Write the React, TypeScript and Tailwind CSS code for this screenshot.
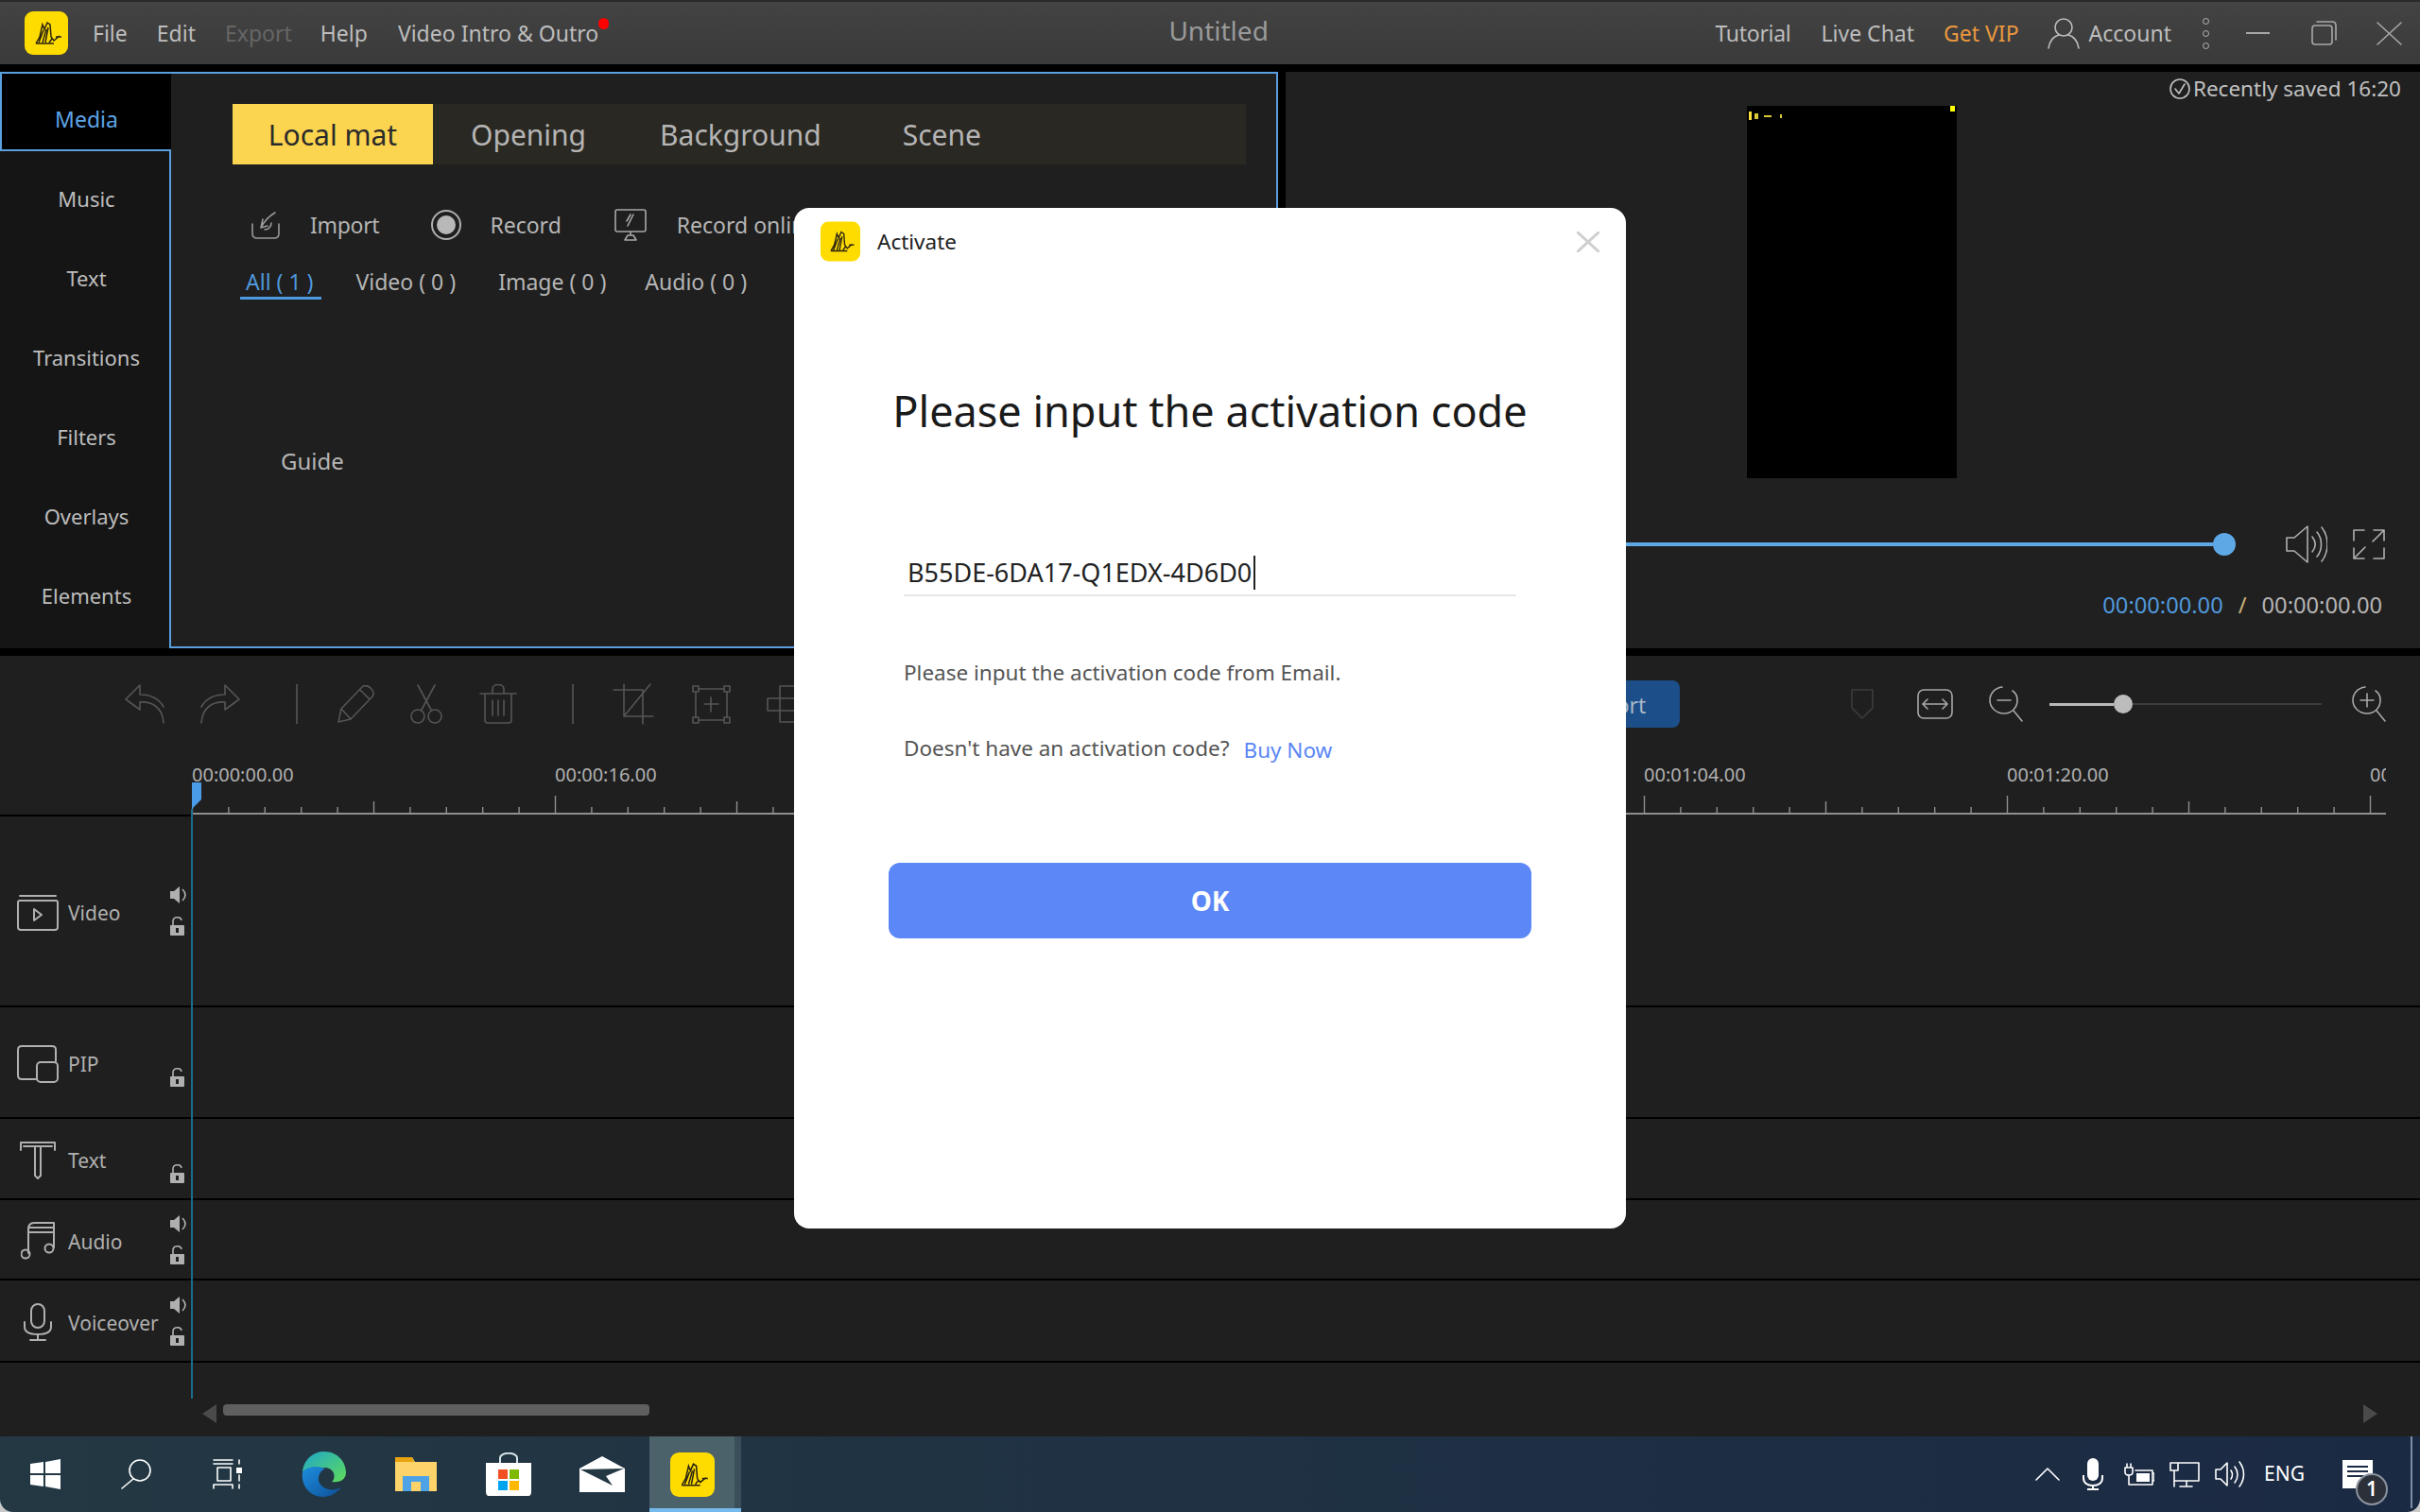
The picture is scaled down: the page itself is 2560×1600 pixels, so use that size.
import type { ReactNode } from "react";

function Logo({ className }: { className: string }) {
  return (
    <svg viewBox="0 0 46 46" className={className}>
      <rect width="46" height="46" rx="9" fill="#ffdc00" />
      <path
        d="M12 34 L16 27 L19 14 L21 19 L24 12 L27 14 L28 27 L31 31 L37 26 M12 34 H31 M15 33 L20 20 M19 33 L23 19 M22 33 L25 17 M26 33 L29 29 M33 27 H39"
        fill="none"
        stroke="#2a2410"
        strokeWidth="1.5"
      />
    </svg>
  );
}

function Line({ className, children, vb }: { className: string; children: ReactNode; vb: string }) {
  return (
    <svg viewBox={vb} className={className} fill="none" stroke="currentColor" strokeWidth="1.6" strokeLinecap="round" strokeLinejoin="round">
      {children}
    </svg>
  );
}

function TitleBar() {
  return (
    <div className="flex h-[68px] shrink-0 items-center border-t-2 border-[#2a2a2a] bg-linear-to-b from-[#434343] to-[#3a3a3a] text-[23px] text-[#bdbdbd]">
      <Logo className="ml-[26px] h-[46px] w-[46px]" />
      <span className="ml-[26px]">File</span>
      <span className="ml-[31px]">Edit</span>
      <span className="ml-[31px] text-[#666666]">Export</span>
      <span className="ml-[30px]">Help</span>
      <span className="relative ml-[32px]">
        Video Intro &amp; Outro
        <span className="absolute -right-[11px] top-[1px] h-[12px] w-[11px] rounded-full bg-[#ff0000]" />
      </span>
      <span className="mb-[6px] ml-[488px] w-[336px] text-center text-[28px] text-[#9a9a9a]">Untitled</span>
      <div className="ml-auto flex items-center">
        <span className="tracking-[-0.3px]">Tutorial</span>
        <span className="ml-[32px]">Live Chat</span>
        <span className="ml-[31px] text-[#e9983f]">Get VIP</span>
        <Line vb="0 0 34 34" className="ml-[30px] h-[34px] w-[34px]">
          <circle cx="17" cy="11" r="9" />
          <path d="M1 33 C2 25 7 20 12 19 M33 33 C32 25 27 20 22 19" />
        </Line>
        <span className="ml-[10px]">Account</span>
        <div className="ml-[32px] flex w-[8px] flex-col items-center gap-[6px]">
          <span className="h-[7px] w-[7px] rounded-full border border-[#b8b8b8]" />
          <span className="h-[7px] w-[7px] rounded-full border border-[#b8b8b8]" />
          <span className="h-[7px] w-[7px] rounded-full border border-[#b8b8b8]" />
        </div>
        <span className="ml-[39px] h-[2px] w-[25px] bg-[#a8a8a8]" />
        <Line vb="0 0 27 26" className="ml-[44px] h-[26px] w-[27px] text-[#a8a8a8]">
          <rect x="1" y="5" width="21" height="20" rx="3" />
          <path d="M6 1 H22 C24.5 1 26 2.5 26 5 V20" />
        </Line>
        <Line vb="0 0 27 25" className="ml-[42px] mr-[19px] h-[25px] w-[27px] text-[#a8a8a8]">
          <path d="M1 1 L26 24 M26 1 L1 24" />
        </Line>
      </div>
    </div>
  );
}

const sideItems = ["Music", "Text", "Transitions", "Filters", "Overlays", "Elements"];

function MediaPanel() {
  return (
    <div className="flex w-[1352px] shrink-0">
      <div className="flex w-[181px] shrink-0 flex-col">
        <div className="flex h-[84px] items-center justify-center border-y-2 border-l-2 border-[#5a9fdf] pt-[16px] text-[23px] text-[#5da4e6]">
          Media
        </div>
        <div className="flex-1 border-r-2 border-[#5a9fdf] bg-[#151515] pl-[4px] pt-[8px] text-[22px] text-[#bdbdbd]">
          {sideItems.map((item) => (
            <div key={item} className="flex h-[84px] items-center justify-center">
              {item}
            </div>
          ))}
        </div>
      </div>
      <div className="flex flex-1 flex-col border-y-2 border-r-2 border-[#5a9fdf] bg-[#1f1f1f] pl-[65px] pt-[32px]">
        <div className="flex h-[64px] w-[1072px] items-center bg-[#2a2822] text-[30px] text-[#b5b5b5]">
          <div className="flex h-full w-[212px] items-center justify-center bg-[#fbd450] text-[#2a2a2a]">Local mat</div>
          <span className="ml-[40px]">Opening</span>
          <span className="ml-[78px]">Background</span>
          <span className="ml-[86px]">Scene</span>
        </div>
        <div className="ml-[20px] mt-[44px] flex h-[40px] items-center text-[23px] text-[#b5b5b5]">
          <Line vb="0 0 30 30" className="h-[30px] w-[30px] text-[#9a9a9a]">
            <path d="M1 14 V24 C1 27 3 29 6 29 H24 C27 29 29 27 29 24 V14 M12 9 L10 18 L17 16 M10 18 C13 12 18 6 25 2 M14 20 C18 20 21 17 21 13" />
          </Line>
          <span className="ml-[32px] tracking-[-0.3px]">Import</span>
          <div className="ml-[55px] flex h-[32px] w-[32px] items-center justify-center rounded-full border-2 border-[#b0b0b0]">
            <span className="h-[20px] w-[20px] rounded-full bg-[#b8b8b8]" />
          </div>
          <span className="ml-[30px]">Record</span>
          <Line vb="0 0 34 34" className="ml-[56px] h-[34px] w-[34px] text-[#a8a8a8]">
            <path d="M3 1 H31 C32 1 33 2 33 3 V22 C33 23 32 24 31 24 H3 C2 24 1 23 1 22 V3 C1 2 2 1 3 1 Z M20 6 L14 18 M17 6 L13 13 M17 24 V28 M11 33 H23 L20 28 H14 Z" />
          </Line>
          <span className="ml-[32px]">Record online</span>
        </div>
        <div className="relative ml-[14px] mt-[20px] flex h-[40px] items-center text-[23px] text-[#b5b5b5]">
          <span className="text-[#5098dc]">All ( 1 )</span>
          <span className="ml-[45px]">Video ( 0 )</span>
          <span className="ml-[45px]">Image ( 0 )</span>
          <span className="ml-[41px]">Audio ( 0 )</span>
          <span className="absolute -left-[6px] bottom-[1px] h-[3px] w-[86px] bg-[#4d9ae0]" />
        </div>
        <span className="ml-[51px] mt-[152px] text-[24px] text-[#b5b5b5]">Guide</span>
      </div>
    </div>
  );
}

function PreviewPanel() {
  return (
    <div className="ml-[8px] flex flex-1 flex-col bg-[#202020]">
      <div className="flex h-[36px] items-center justify-end pr-[20px] text-[22.5px] text-[#c0c0c0]">
        <Line vb="0 0 22 22" className="mr-[3px] h-[22px] w-[22px]">
          <circle cx="11" cy="11" r="10" />
          <path d="M6 11 L10 16 L16 6" />
        </Line>
        Recently saved 16:20
      </div>
      <div className="ml-[488px] flex h-[394px] w-[222px] items-start justify-between bg-black px-[2px] text-[#f7e23b]">
        <span className="mt-[6px] flex items-center gap-[3px]">
          <span className="h-[9px] w-[3px] bg-[#f7e23b]" />
          <span className="h-[6px] w-[4px] bg-[#d9c932]" />
          <span className="ml-[3px] h-[2px] w-[8px] bg-[#d9c932]" />
          <span className="ml-[6px] h-[4px] w-[2px] bg-[#d9c932]" />
        </span>
        <span className="h-[6px] w-[5px] bg-[#ffff00]" />
      </div>
      <div className="mt-[46px] flex h-[48px] items-center text-[#b0b0b0]">
        <div className="ml-[40px] h-[4px] w-[941px] bg-[#5ea8e6]" />
        <span className="h-[24px] w-[24px] rounded-full bg-[#5ea8e6]" />
        <Line vb="0 0 44 42" className="ml-[53px] h-[42px] w-[44px]">
          <path d="M1 14 H9 L23 2 V40 L9 28 H1 Z M28 13 C32 18 32 24 28 29 M33 8 C39 15 39 27 33 34 M38 3 C46 13 46 29 38 39" />
        </Line>
        <Line vb="0 0 34 32" className="ml-[27px] h-[32px] w-[34px]">
          <path d="M12 1 H1 V12 M33 1 L21 13 M22 1 H33 V12 M1 31 L13 19 M1 20 V31 H12 M22 31 H33 V20" />
        </Line>
      </div>
      <div className="mt-[21px] flex h-[40px] items-center justify-end pr-[40px] text-[23.7px] text-[#b5b5b5]">
        <span className="text-[#5098dc]">00:00:00.00</span>
        <span className="mx-[16px] text-[#c9b27a]">/</span>
        <span>00:00:00.00</span>
      </div>
    </div>
  );
}

function Toolbar() {
  return (
    <div className="flex h-[102px] shrink-0 items-center text-[#555555]">
      <Line vb="0 0 42 42" className="ml-[132px] h-[42px] w-[42px]">
        <path d="M16 1 L1 16 L16 27 V19 C28 18 40 24 41 41 M16 1 V11 C27 11 36 15 41 24" />
      </Line>
      <Line vb="0 0 42 42" className="ml-[38px] h-[42px] w-[42px]">
        <path d="M26 1 L41 16 L26 27 V19 C14 18 2 24 1 41 M26 1 V11 C15 11 6 15 1 24" />
      </Line>
      <span className="ml-[59px] h-[42px] w-[2px] bg-[#4a4a4a]" />
      <Line vb="0 0 40 40" className="ml-[42px] h-[40px] w-[40px]">
        <path d="M1 39 L4 25 L26 2 C28 0 32 0 35 3 C38 6 39 10 37 12 L14 36 Z M4 25 L14 36 M24 5 L34 15" />
      </Line>
      <Line vb="0 0 36 42" className="ml-[36px] h-[42px] w-[36px]">
        <path d="M9 1 L23 27 M27 1 L13 27" />
        <circle cx="9" cy="34" r="7" />
        <circle cx="27" cy="34" r="7" />
      </Line>
      <Line vb="0 0 40 42" className="ml-[38px] h-[42px] w-[40px]">
        <path d="M1 10 H39 M14 10 V5 C14 -1 26 -1 26 5 V10 M6 10 V38 C6 40 7 41 9 41 H31 C33 41 34 40 34 38 V10 M14 17 V33 M20 17 V33 M26 17 V33" />
      </Line>
      <span className="ml-[58px] h-[42px] w-[2px] bg-[#4a4a4a]" />
      <Line vb="0 0 44 44" className="ml-[41px] h-[44px] w-[44px]">
        <path d="M1 7 H32 V43 M12 1 V35 H43 M12 35 L40 1" />
      </Line>
      <Line vb="0 0 41 41" className="ml-[40px] h-[41px] w-[41px]">
        <rect x="1" y="1" width="6" height="6" />
        <rect x="34" y="1" width="6" height="6" />
        <rect x="1" y="34" width="6" height="6" />
        <rect x="34" y="34" width="6" height="6" />
        <path d="M7 4 H34 M7 37 H34 M4 7 V34 M37 7 V34 M20 13 V28 M13 20 H28" />
      </Line>
      <Line vb="0 0 40 40" className="ml-[38px] h-[40px] w-[40px]">
        <path d="M14 1 H39 V14 H14 Z M1 14 H14 V27 H1 Z M14 27 H39 V39 H14 Z" />
      </Line>
      <div className="ml-[784px] flex h-[50px] w-[142px] items-center justify-center rounded-[8px] bg-[#1c4e89] pt-[2px] text-[23px] text-[#a8b8c8]">
        Export
      </div>
      <Line vb="0 0 24 32" className="ml-[181px] h-[32px] w-[24px] text-[#3c3c3c]">
        <path d="M1 1 H23 V20 L12 31 L1 20 Z" />
      </Line>
      <Line vb="0 0 38 32" className="ml-[46px] h-[32px] w-[38px] text-[#a8a8a8]">
        <rect x="1" y="1" width="36" height="30" rx="6" />
        <path d="M7 16 H31 M11 11 L6 16 L11 21 M27 11 L32 16 L27 21" />
      </Line>
      <Line vb="0 0 36 38" className="ml-[38px] h-[38px] w-[36px] text-[#a8a8a8]">
        <path d="M14 1 C6 2 1 8 1 15 C1 23 8 29 16 29 C24 29 30 23 30 15 C30 11 28 7 25 5 M26 26 L35 37 M9 15 H23" />
      </Line>
      <div className="ml-[28px] flex h-[22px] w-[288px] items-center">
        <span className="h-[3px] w-[68px] bg-[#b8b8b8]" />
        <span className="h-[20px] w-[20px] rounded-full bg-[#bcbcbc]" />
        <span className="h-[2px] flex-1 bg-[#3c3c3c]" />
      </div>
      <Line vb="0 0 36 38" className="ml-[32px] h-[38px] w-[36px] text-[#a8a8a8]">
        <path d="M14 1 C6 2 1 8 1 15 C1 23 8 29 16 29 C24 29 30 23 30 15 C30 11 28 7 25 5 M26 26 L35 37 M9 15 H23 M16 8 V22" />
      </Line>
    </div>
  );
}

const rulerLabels = ["00:00:00.00", "00:00:16.00", "00:00:32.00", "00:00:48.00", "00:01:04.00", "00:01:20.00", "00:01:36.00"];
const ticks = Array.from({ length: 61 }, (_, i) => i);

function Ruler() {
  return (
    <div className="flex h-[68px] shrink-0">
      <div className="w-[203px] border-b-2 border-black" />
      <div className="flex w-[2321px] flex-col overflow-hidden">
        <div className="flex h-[44px] items-center pt-[4px]">
          {rulerLabels.map((label) => (
            <span key={label} className="w-[384px] shrink-0 text-[20px] text-[#b0b0b0]">
              {label}
            </span>
          ))}
        </div>
        <svg viewBox="0 0 2321 24" className="h-[24px] w-[2321px] text-[#8f8f8f]">
          {ticks.map((i) => {
            const x = i * 38.4 + 0.5;
            const top = i % 10 === 0 ? 2 : i % 5 === 0 ? 8 : 14;
            return <line key={i} x1={x} x2={x} y1={top} y2={22} stroke="currentColor" strokeWidth="1.4" />;
          })}
          <rect x="0" y="20" width="2321" height="2" fill="currentColor" />
        </svg>
      </div>
    </div>
  );
}

function Speaker() {
  return (
    <svg viewBox="0 0 18 18" className="h-[18px] w-[18px] text-[#b0b0b0]">
      <path d="M0 5 H4 L10 0 V18 L4 13 H0 Z" fill="currentColor" />
      <path d="M13 3 C17 7 17 11 13 15" fill="none" stroke="currentColor" strokeWidth="1.6" />
    </svg>
  );
}

function Lock() {
  return (
    <svg viewBox="0 0 15 20" className="h-[20px] w-[15px] text-[#b0b0b0]">
      <path d="M3 9 V5 C3 0 11 -1 12 4" fill="none" stroke="currentColor" strokeWidth="1.6" />
      <path fillRule="evenodd" d="M1 9 H14 C14.6 9 15 9.4 15 10 V19 C15 19.6 14.6 20 14 20 H1 C0.4 20 0 19.6 0 19 V10 C0 9.4 0.4 9 1 9 Z M6 12 V17 H9 V12 Z" fill="currentColor" />
    </svg>
  );
}

interface TrackProps {
  label: string;
  height: string;
  icon: ReactNode;
  speaker?: boolean;
}

function Track({ label, height, icon, speaker }: TrackProps) {
  return (
    <div className={`flex shrink-0 items-center border-b-2 border-black ${height}`}>
      <div className="mt-[3px] flex w-[72px] shrink-0 justify-center pl-[8px] text-[#b0b0b0]">{icon}</div>
      <span className="mt-[6px] w-[108px] shrink-0 text-[21px] text-[#b0b0b0]">{label}</span>
      {speaker ? (
        <div className="flex flex-col gap-[14px]">
          <Speaker />
          <Lock />
        </div>
      ) : (
        <div className="mt-[32px]">
          <Lock />
        </div>
      )}
    </div>
  );
}

function Timeline() {
  return (
    <div className="relative flex flex-1 flex-col bg-[#1f1f1f]">
      <Toolbar />
      <Ruler />
      <Track
        label="Video"
        height="h-[202px]"
        speaker
        icon={
          <Line vb="0 0 44 38" className="h-[38px] w-[44px] stroke-2">
            <path d="M3 1 H41 M3 6 H41 C42 6 43 7 43 8 V34 C43 36 42 37 40 37 H4 C2 37 1 36 1 34 V8 C1 7 2 6 3 6 Z M18 15 L26 21 L18 27 Z" />
          </Line>
        }
      />
      <Track
        label="PIP"
        height="h-[118px]"
        icon={
          <Line vb="0 0 44 40" className="h-[40px] w-[44px] stroke-2">
            <path d="M20 36 H5 C2 36 1 34 1 32 V5 C1 3 2 1 5 1 H37 C40 1 41 3 41 5 V17" />
            <rect x="21" y="18" width="22" height="21" rx="4" />
          </Line>
        }
      />
      <Track
        label="Text"
        height="h-[86px]"
        icon={
          <Line vb="0 0 38 40" className="h-[40px] w-[38px] stroke-2">
            <path d="M1 9 V1 H37 V9 M4 5 H34 M16 5 V36 L19 39 L22 36 V5" />
          </Line>
        }
      />
      <Track
        label="Audio"
        height="h-[85px]"
        speaker
        icon={
          <Line vb="0 0 36 40" className="h-[40px] w-[36px] stroke-2">
            <path d="M8 33 V8 C8 3 10 1 14 1 H35 V27 M8 11 H35 M8 6 H35" />
            <circle cx="5" cy="34" r="4.5" />
            <circle cx="30" cy="28" r="4.5" />
          </Line>
        }
      />
      <Track
        label="Voiceover"
        height="h-[87px]"
        speaker
        icon={
          <Line vb="0 0 30 40" className="h-[40px] w-[30px] stroke-2">
            <rect x="8" y="1" width="14" height="25" rx="7" />
            <path d="M1 20 V25 C1 30 6 33 15 33 C24 33 29 30 29 25 V20 M15 33 V39 M7 39 H23" />
          </Line>
        }
      />
      <div className="flex items-start pt-[44px]">
        <svg viewBox="0 0 15 20" className="ml-[214px] h-[20px] w-[15px] text-[#4a4a4a]">
          <path d="M15 0 V20 L0 10 Z" fill="currentColor" />
        </svg>
        <span className="ml-[7px] h-[12px] w-[451px] rounded-[4px] bg-[#5f5f5f]" />
        <svg viewBox="0 0 15 20" className="ml-[1813px] h-[20px] w-[15px] text-[#4a4a4a]">
          <path d="M0 0 V20 L15 10 Z" fill="currentColor" />
        </svg>
      </div>
      <span className="absolute left-[202px] top-[162px] h-[624px] w-[2px] bg-[#1c6b8f]" />
      <svg viewBox="0 0 10 28" className="absolute left-[203px] top-[134px] h-[28px] w-[10px]">
        <path d="M0 0 H10 V18 L0 28 Z" fill="#4a9be8" />
      </svg>
    </div>
  );
}

function TrayIcons() {
  return (
    <div className="ml-auto flex items-center text-white">
      <Line vb="0 0 26 14" className="h-[14px] w-[26px]">
        <path d="M1 13 L13 1 L25 13" />
      </Line>
      <svg viewBox="0 0 22 34" className="ml-[24px] h-[34px] w-[22px]">
        <rect x="5" y="0" width="12" height="24" rx="6" fill="currentColor" />
        <path d="M1 18 V21 C1 26 5 29 11 29 C17 29 21 26 21 21 V18 M11 29 V33 M5 33 H17" fill="none" stroke="currentColor" strokeWidth="2" />
      </svg>
      <Line vb="0 0 32 24" className="ml-[22px] h-[24px] w-[32px]">
        <path d="M3 1 V5 M7 1 V5 M1 5 H9 V10 C9 12 7 13 5 13 C3 13 1 12 1 10 Z M5 13 V23 H30 V8 H12 M30 11 H32 V19 H30" />
        <rect x="13" y="11" width="14" height="9" fill="currentColor" stroke="none" />
      </Line>
      <Line vb="0 0 32 28" className="ml-[16px] h-[28px] w-[32px]">
        <path d="M9 2 H31 V21 H5 M1 2 H9 V10 H1 Z M5 10 V27 M18 21 V26 M11 27 H24" />
      </Line>
      <Line vb="0 0 32 30" className="ml-[16px] h-[30px] w-[32px]">
        <path d="M1 10 H6 L13 3 V27 L6 20 H1 Z M17 11 C19 14 19 17 17 20 M21 7 C25 12 25 19 21 24 M26 2 C32 10 32 20 26 28" />
      </Line>
      <span className="ml-[20px] w-[46px] text-[21px] text-white">ENG</span>
      <div className="relative ml-[37px] mr-[50px] h-[30px] w-[32px] bg-white pt-[6px]">
        <span className="mx-[5px] block h-[2px] bg-[#1b2a43]" />
        <span className="mx-[5px] mt-[3px] block h-[2px] bg-[#1b2a43]" />
        <span className="mx-[5px] mt-[3px] block h-[2px] bg-[#1b2a43]" />
        <span className="absolute left-[14px] top-[14px] flex h-[34px] w-[34px] items-center justify-center rounded-full border-2 border-[#8b93a0] bg-[#2c3038] text-[21px] font-semibold text-white">
          1
        </span>
      </div>
    </div>
  );
}

function Taskbar() {
  return (
    <div className="relative flex h-[80px] shrink-0 items-center rounded-b-[14px] bg-linear-to-r from-[#233843] to-[#1b2a43]">
      <svg viewBox="0 0 32 32" className="ml-[32px] h-[32px] w-[32px]">
        <path d="M0 5 L14 3 V15 H0 Z M16 3 L32 0 V15 H16 Z M0 17 H14 V29 L0 27 Z M16 17 H32 V32 L16 29 Z" fill="#ffffff" />
      </svg>
      <Line vb="0 0 32 32" className="ml-[64px] h-[32px] w-[32px] text-white">
        <circle cx="20" cy="12" r="11" />
        <path d="M13 21 L1 31" />
      </Line>
      <Line vb="0 0 32 32" className="ml-[64px] h-[32px] w-[32px] text-white">
        <path d="M2 1 H22 M2 5 H22 M6 9 H20 V23 H6 Z M2 27 H22 M2 27 V31 M22 27 V31 M29 1 V5 M29 27 V31 M29 17 V23" />
        <rect x="26" y="9" width="6" height="6" fill="currentColor" stroke="none" />
      </Line>
      <svg viewBox="0 0 48 48" className="ml-[62px] h-[48px] w-[48px]">
        <defs>
          <linearGradient id="edgeTop" x1="0" y1="0" x2="1" y2="1">
            <stop offset="0" stopColor="#1fa6c9" />
            <stop offset="1" stopColor="#5fdc5a" />
          </linearGradient>
          <linearGradient id="edgeBottom" x1="0" y1="0" x2="1" y2="1">
            <stop offset="0" stopColor="#1d8fe0" />
            <stop offset="1" stopColor="#0e4f96" />
          </linearGradient>
        </defs>
        <path d="M2 22 C3 8 14 0 25 0 C39 0 48 11 48 22 C48 31 40 33 33 32 C38 28 36 17 25 17 C14 17 6 17 2 22 Z" fill="url(#edgeTop)" />
        <path d="M2 22 C0 36 10 48 24 48 C31 48 38 44 43 38 C36 42 27 41 22 36 C17 31 18 22 26 18 C16 14 6 16 2 22 Z" fill="url(#edgeBottom)" />
      </svg>
      <svg viewBox="0 0 44 36" className="ml-[52px] h-[36px] w-[44px]">
        <path d="M0 0 H18 L21 5 H44 V36 H0 Z" fill="#fdd36a" />
        <path d="M0 0 H18 L20 5 H0 Z" fill="#e8a30e" />
        <path d="M8 36 V20 H36 V36 H27 V26 H17 V36 Z" fill="#4ea3e6" />
      </svg>
      <svg viewBox="0 0 48 46" className="ml-[52px] h-[46px] w-[48px]">
        <path d="M15 12 V6 C15 -1 33 -1 33 6 V12" fill="none" stroke="#d8e4ea" strokeWidth="2" />
        <path d="M0 11 H48 V42 C48 44 47 46 45 46 H3 C1 46 0 44 0 42 Z" fill="#ffffff" />
        <rect x="13" y="18" width="10" height="10" fill="#f25022" />
        <rect x="25" y="18" width="10" height="10" fill="#7fba00" />
        <rect x="13" y="30" width="10" height="10" fill="#00a4ef" />
        <rect x="25" y="30" width="10" height="10" fill="#ffb900" />
      </svg>
      <svg viewBox="0 0 48 38" className="ml-[51px] h-[38px] w-[48px]">
        <path d="M0 13 L24 0 L48 13 V38 H0 Z" fill="#ffffff" />
        <path d="M1 14 L47 13 L28 21 L35 31 Z" fill="#233843" />
      </svg>
      <div className="ml-[26px] flex h-full w-[90px] items-center justify-center border-b-[4px] border-[#76b9ed] bg-[#4c626b] pt-[4px]">
        <Logo className="h-[47px] w-[47px]" />
      </div>
      <span className="h-full w-[7px] border-b-[4px] border-[#76b9ed] bg-[#3a4f59]" />
      <TrayIcons />
      <span className="absolute bottom-[4px] right-[8px] top-0 w-[2px] bg-[#7e8da5]" />
    </div>
  );
}

function ActivateDialog() {
  return (
    <div className="absolute left-[840px] top-[220px] flex h-[1080px] w-[880px] flex-col rounded-[16px] bg-white">
      <div className="flex items-center pl-[28px] pt-[14px]">
        <Logo className="h-[43px] w-[42px]" />
        <span className="ml-[18px] mt-[1px] text-[22.5px] text-[#222222]">Activate</span>
        <Line vb="0 0 24 22" className="ml-auto mr-[28px] h-[22px] w-[24px] stroke-[3] text-[#cfcfcf]">
          <path d="M1 1 L23 21 M23 1 L1 21" />
        </Line>
      </div>
      <h1 className="mt-[123px] text-center text-[45px] font-normal leading-[70px] text-[#1a1a1a]">
        Please input the activation code
      </h1>
      <div className="mx-[116px] mt-[116px] flex h-[45px] items-center border-b-2 border-[#e8e8e8] pb-[3px] pl-[4px] text-[27px] text-[#222222]">
        B55DE-6DA17-Q1EDX-4D6D0
        <span className="ml-[2px] h-[36px] w-[2px] bg-[#222222]" />
      </div>
      <p className="ml-[116px] mt-[65px] text-[22.5px] leading-[32px] text-[#555555]">Please input the activation code from Email.</p>
      <div className="ml-[116px] mt-[48px] flex h-[32px] items-center text-[22.5px] text-[#555555]">
        Doesn't have an activation code?
        <span className="ml-[15px] mt-[3px] text-[#5a86f5]">Buy Now</span>
      </div>
      <button className="mx-[100px] mt-[105px] h-[80px] rounded-[12px] bg-[#5b87f7] text-[28px] font-bold text-white">OK</button>
    </div>
  );
}

export default function App() {
  return (
    <div className="relative flex h-[1600px] w-[2560px] flex-col overflow-hidden bg-[#c8c8c8] font-['Noto_Sans','Open_Sans',sans-serif]">
      <div className="flex h-[1520px] shrink-0 flex-col bg-black">
        <TitleBar />
        <div className="h-[8px] shrink-0" />
        <div className="flex h-[610px] shrink-0 bg-black">
          <MediaPanel />
          <PreviewPanel />
        </div>
        <div className="h-[8px] shrink-0" />
        <Timeline />
      </div>
      <Taskbar />
      <ActivateDialog />
    </div>
  );
}
